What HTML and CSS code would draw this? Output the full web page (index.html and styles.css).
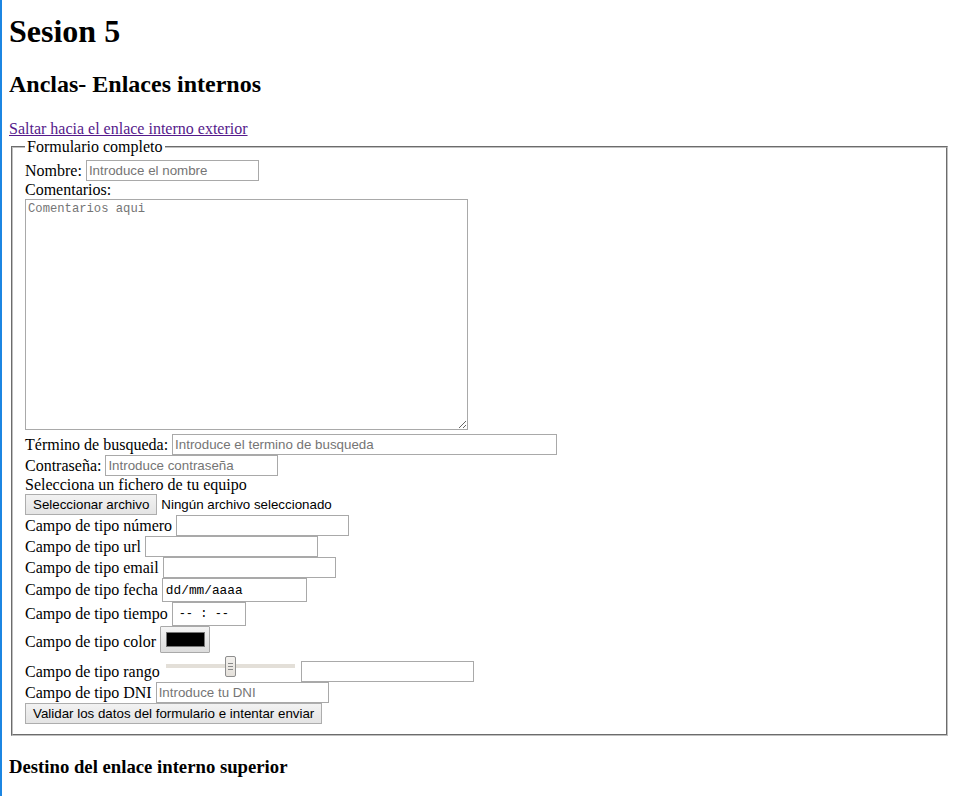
FILE: index.html
```html
<!DOCTYPE html>
<html lang="es">
<head>
<meta charset="utf-8">
<title>Sesion 5</title>
<link rel="stylesheet" href="styles.css">
</head>
<body>
<h1>Sesion 5</h1>
<h2>Anclas- Enlaces internos</h2>
<div class="jump"><a href="#destino">Saltar hacia el enlace interno exterior</a></div>
<form>
<fieldset class="box">
<legend>Formulario completo</legend>
<div class="row"><label for="nombre">Nombre:</label><input class="txt w173" id="nombre" type="text" placeholder="Introduce el nombre"></div>
<div class="row lab"><label for="com">Comentarios:</label></div>
<div class="tarow"><textarea id="com" class="ta" placeholder="Comentarios aqui"></textarea></div>
<div class="row"><label for="bus">Término de busqueda:</label><input class="txt w385" id="bus" type="text" placeholder="Introduce el termino de busqueda"></div>
<div class="row"><label for="pw">Contraseña:</label><input class="txt w173" id="pw" type="text" placeholder="Introduce contraseña"></div>
<div class="row lab"><span>Selecciona un fichero de tu equipo</span></div>
<div class="row"><button type="button" class="btn">Seleccionar archivo</button><span class="nofile">Ningún archivo seleccionado</span></div>
<div class="row"><label for="num">Campo de tipo número</label><input class="txt w173" id="num" type="text"></div>
<div class="row"><label for="url">Campo de tipo url</label><input class="txt w173" id="url" type="text"></div>
<div class="row"><label for="em">Campo de tipo email</label><input class="txt w173" id="em" type="text"></div>
<div class="row tall"><label for="fe">Campo de tipo fecha</label><input class="txt mono w145" id="fe" type="text" value="dd/mm/aaaa"></div>
<div class="row tall"><label for="ti">Campo de tipo tiempo</label><input class="txt mono w74 time" id="ti" type="text" value="-- : --"></div>
<div class="row colorrow"><label for="co">Campo de tipo color</label><span class="colorbtn" id="co"><span class="swatch"></span></span></div>
<div class="row rangerow"><label for="ra">Campo de tipo rango</label><input class="range" id="ra" type="range" min="0" max="100" value="50"><input class="txt w173" type="text"></div>
<div class="row"><label for="dni">Campo de tipo DNI</label><input class="txt w173" id="dni" type="text" placeholder="Introduce tu DNI"></div>
<div class="row"><button type="submit" class="btn">Validar los datos del formulario e intentar enviar</button></div>
</fieldset>
</form>
<h3 id="destino">Destino del enlace interno superior</h3>
</body>
</html>
```
FILE: styles.css
```css
html {
  box-shadow: inset 2px 0 0 #1c86e2;
  min-height: 100%;
  background: #fff;
}
body {
  margin: 0 7px 8px 9px;
  font-family: "Liberation Serif", "Times New Roman", serif;
  font-size: 16px;
  color: #000;
}
h1 {
  font-size: 32px;
  margin: 13px 0 21.44px;
}
h2 {
  font-size: 24px;
  margin: 19.92px 0 22px;
}
h3 {
  font-size: 18.72px;
  margin: 20px 0 18.72px;
}
a {
  color: #551a8b;
}
.box {
  margin: 0 2px;
  padding: 4px 12px 10px 12px;
  border: 2px groove #c0c0c0;
}
.box legend {
  padding: 0 2px;
}
.row {
  display: flex;
  align-items: center;
  gap: 4px;
  height: 21px;
  white-space: nowrap;
}
.row.lab {
  height: 18px;
}
.row.tall {
  height: 24px;
}
.tarow {
  height: 235px;
}
.ta {
  display: block;
  box-sizing: border-box;
  width: 443px;
  height: 231px;
  margin: 0;
  padding: 2px;
  border: 1px solid #a9a9a9;
  font-family: "Liberation Mono", "Courier New", monospace;
  font-size: 12.2px;
  resize: both;
}
.ta::placeholder {
  color: #757575;
}
.txt {
  box-sizing: border-box;
  height: 21px;
  margin: 0;
  padding: 1px 2px;
  border: 1px solid #a9a9a9;
  border-radius: 0;
  font-family: "Liberation Sans", Arial, sans-serif;
  font-size: 13.33px;
  color: #000;
  background: #fff;
  outline: none;
}
.txt::placeholder {
  color: #757575;
}
.tall .txt {
  height: 24px;
}
.mono {
  font-family: "Liberation Mono", "Courier New", monospace;
  font-size: 12.8px;
  padding: 1px 3px;
}
.time {
  font-size: 12px;
  letter-spacing: 0;
  padding-left: 6px;
}
.w173 { width: 173px; }
.w385 { width: 385px; }
.w145 { width: 145px; }
.w74 { width: 74px; }
.btn {
  box-sizing: border-box;
  height: 21px;
  margin: 0;
  padding: 0 7px;
  border: 1px solid #adadad;
  border-radius: 0;
  background: linear-gradient(#f2f2f2, #e4e4e4);
  font-family: "Liberation Sans", Arial, sans-serif;
  font-size: 13.33px;
  color: #000;
}
.nofile {
  font-family: "Liberation Sans", Arial, sans-serif;
  font-size: 13.33px;
}
.colorrow {
  height: 29px;
  align-items: flex-start;
}
.colorrow label {
  margin-top: 7px;
}
.colorbtn {
  box-sizing: border-box;
  display: flex;
  width: 50px;
  height: 27px;
  padding: 5px 4px 5px 5px;
  border: 1px solid #a9a9a9;
  border-radius: 1px;
  background: linear-gradient(#f4f4f4, #dcdcdc);
}
.swatch {
  flex: 1;
  background: #000;
  border: 1px solid #777;
}
.rangerow {
  height: 27px;
  align-items: flex-end;
}
.rangerow label {
  margin-bottom: 1px;
}
.range {
  -webkit-appearance: none;
  appearance: none;
  width: 129px;
  height: 21px;
  margin: 0 2px 6px 2px;
  padding: 0;
  background: transparent;
}
.range::-webkit-slider-runnable-track {
  height: 4px;
  background: #e3dfd8;
  border: none;
}
.range::-webkit-slider-thumb {
  -webkit-appearance: none;
  appearance: none;
  box-sizing: border-box;
  width: 11px;
  height: 21px;
  margin-top: -8px;
  border: 1px solid #8e8e8e;
  border-radius: 2px;
  background:
    linear-gradient(#8a8a8a, #8a8a8a) no-repeat 2px 6px / 5px 1px,
    linear-gradient(#8a8a8a, #8a8a8a) no-repeat 2px 9px / 5px 1px,
    linear-gradient(#8a8a8a, #8a8a8a) no-repeat 2px 12px / 5px 1px,
    linear-gradient(#f3f1ee, #e4e0da);
}
```
